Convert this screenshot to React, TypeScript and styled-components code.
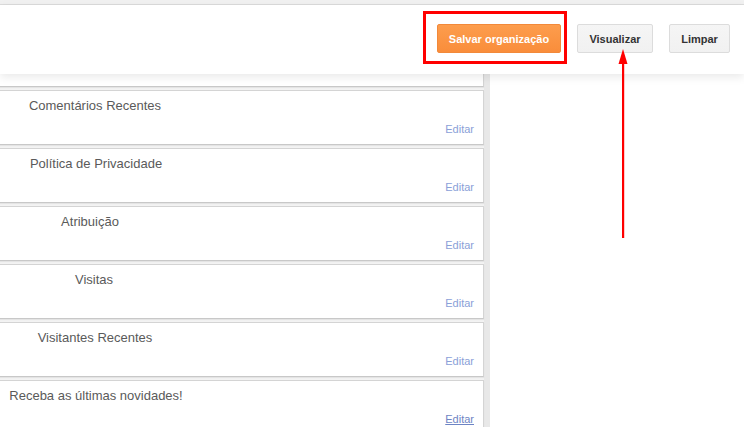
import React from "react";
import styled, { createGlobalStyle } from "styled-components";

const Global = createGlobalStyle`
  html, body { margin: 0; padding: 0; background: #fff; }
  body { font-family: "Liberation Sans", Arial, sans-serif; overflow: hidden; }
`;

const Page = styled.div`
  position: relative;
  width: 744px;
  height: 427px;
  overflow: hidden;
  display: flex;
  flex-direction: column;
  background: #fff;
`;

const TopStrip = styled.div`
  height: 4px;
  background: #f1f1f1;
  border-bottom: 1px solid #dcdcdc;
  flex: none;
`;

const Header = styled.header`
  position: relative;
  z-index: 2;
  flex: none;
  height: 69px;
  background: #fff;
  display: flex;
  justify-content: flex-end;
  align-items: center;
  gap: 16px;
  padding: 0 14px 2px 0;
  box-sizing: border-box;
  box-shadow: 0 3px 9px rgba(0, 0, 0, 0.09);
`;

const ButtonWrap = styled.div`
  position: relative;
  display: flex;
`;

const Highlight = styled.div`
  position: absolute;
  top: -13px;
  left: -14px;
  right: -6px;
  bottom: -11px;
  border: 3px solid #ff0000;
  pointer-events: none;
`;

const Button = styled.button<{ $primary?: boolean; $w: number }>`
  width: ${(p) => p.$w}px;
  height: 29px;
  box-sizing: border-box;
  border-radius: 2px;
  font-family: "Liberation Sans", Arial, sans-serif;
  font-size: 11px;
  font-weight: bold;
  padding: 0;
  cursor: pointer;
  border: 1px solid ${(p) => (p.$primary ? "#f2893a" : "#dcdcdc")};
  color: ${(p) => (p.$primary ? "#fff" : "#333")};
  background: ${(p) =>
    p.$primary
      ? "linear-gradient(#fd9d4d, #f98d3b)"
      : "linear-gradient(#f5f5f5, #f1f1f1)"};
`;

const Body = styled.div`
  flex: 1;
  display: flex;
  min-height: 0;
`;

const Column = styled.div`
  width: 484px;
  flex: none;
  background: #f3f3f3;
  border-right: 6px solid #e8e8e8;
  display: flex;
  flex-direction: column;
  gap: 3px;
  margin-top: -42px;
`;

const Card = styled.div`
  flex: none;
  height: 55px;
  margin-left: -10px;
  box-sizing: border-box;
  background: #fff;
  border: 1px solid #d4d4d4;
  border-bottom-color: #c8c8c8;
  box-shadow: 0 1px 1px rgba(0, 0, 0, 0.06);
  display: flex;
  flex-direction: column;
  justify-content: space-between;
  padding: 7px 9px 8px 10px;
`;

const Title = styled.div<{ $shift: number }>`
  width: 190px;
  text-align: center;
  font-size: 13px;
  line-height: 16px;
  color: #5a5a5a;
  white-space: nowrap;
  transform: translateX(${(p) => p.$shift}px);
`;

const EditLink = styled.a<{ $hover?: boolean; $hidden?: boolean }>`
  align-self: flex-end;
  font-size: 11px;
  line-height: 13px;
  color: ${(p) => (p.$hover ? "#6d84c4" : "#8a9fd8")};
  text-decoration: ${(p) => (p.$hover ? "underline" : "none")};
  visibility: ${(p) => (p.$hidden ? "hidden" : "visible")};
  cursor: pointer;
`;

const RightArea = styled.div`
  flex: 1;
  background: #fff;
`;

const Arrow = styled.svg`
  position: absolute;
  left: 617px;
  top: 48px;
  z-index: 3;
  pointer-events: none;
`;

const widgets: { title: string; shift: number }[] = [
  { title: "", shift: 0 },
  { title: "Comentários Recentes", shift: -1 },
  { title: "Política de Privacidade", shift: 0 },
  { title: "Atribuição", shift: -6 },
  { title: "Visitas", shift: -2 },
  { title: "Visitantes Recentes", shift: -1 },
  { title: "Receba as últimas novidades!", shift: 0 },
];

export default function App() {
  return (
    <>
      <Global />
      <Page>
        <TopStrip />
        <Header>
          <ButtonWrap>
            <Button $primary $w={124}>Salvar organização</Button>
            <Highlight />
          </ButtonWrap>
          <Button $w={76}>Visualizar</Button>
          <Button $w={61}>Limpar</Button>
        </Header>
        <Body>
          <Column>
            {widgets.map((w, i) => (
              <Card key={i}>
                <Title $shift={w.shift}>{w.title}</Title>
                <EditLink
                  $hidden={i === 0}
                  $hover={i === widgets.length - 1}
                >
                  Editar
                </EditLink>
              </Card>
            ))}
          </Column>
          <RightArea />
        </Body>
        <Arrow width="12" height="192" viewBox="0 0 12 192">
          <polygon points="6,1 1.5,16 10.5,16" fill="#ff0000" />
          <rect x="5" y="14" width="2.2" height="176" fill="#ff0000" />
        </Arrow>
      </Page>
    </>
  );
}
